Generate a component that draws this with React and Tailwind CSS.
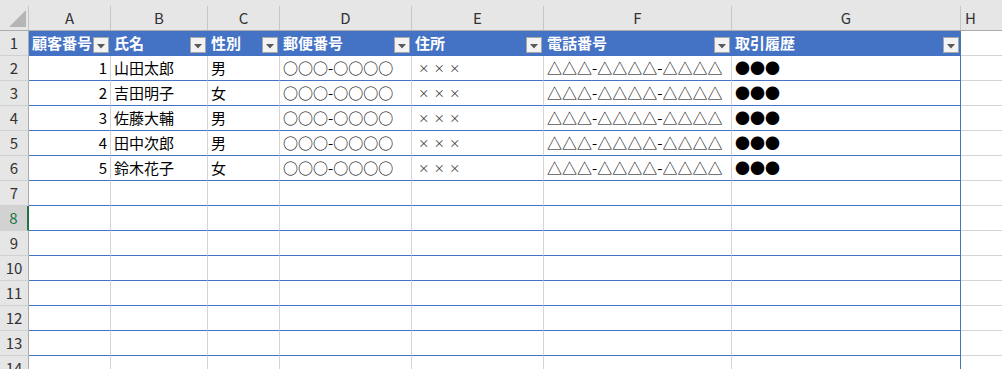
import React from "react";

const GRID = "grid grid-cols-[29px_82px_97px_72px_132px_132px_188px_229px_1fr]";
const FONT = "font-['Yu_Gothic','Noto_Sans_CJK_JP','Noto_Sans',sans-serif]";

const headers = ["顧客番号", "氏名", "性別", "郵便番号", "住所", "電話番号", "取引履歴"];
const rows = [
  [1, "山田太郎", "男"],
  [2, "吉田明子", "女"],
  [3, "佐藤大輔", "男"],
  [4, "田中次郎", "男"],
  [5, "鈴木花子", "女"],
];

function FilterButton() {
  return (
    <div className="self-end mb-[2px] mr-[1px] w-[16px] h-[16px] shrink-0 bg-[#f3f3f3] border border-[#a6a6a6] flex items-center justify-center pt-[2px]">
      <svg width="8" height="5" viewBox="0 0 8 5">
        <polygon points="0,0 8,0 4,4.5" fill="#595959" />
      </svg>
    </div>
  );
}

function Cross() {
  return (
    <span className="flex pl-[1px]">
      {[0, 1, 2].map((i) => (
        <span key={i} className="w-[15.5px] text-center text-[11px] text-[#333333]">×</span>
      ))}
    </span>
  );
}

function RowHeader({ n, selected }) {
  return (
    <div
      className={
        selected
          ? "bg-[#d2d2d2] text-[#217346] border-r-2 border-r-[#217346] border-b border-b-[#d0d0d0] flex items-center justify-center text-[15px]"
          : "bg-[#e6e6e6] text-[#333333] border-r border-r-[#ababab] border-b border-b-[#d0d0d0] flex items-center justify-center text-[15px]"
      }
    >
      {n}
    </div>
  );
}

export default function App() {
  const letters = ["A", "B", "C", "D", "E", "F", "G", "H"];
  const dataCell = "border-r border-r-[#d4d4d4] border-b border-b-[#4472c4] flex items-center px-[3px] text-[15px] text-black whitespace-nowrap overflow-hidden";
  const lastCell = "border-r border-r-[#4472c4] border-b border-b-[#4472c4] flex items-center px-[3px] text-[15px] text-black whitespace-nowrap overflow-hidden";
  const hCell = "border-b border-b-[#d4d4d4]";

  const emptyRows = [7, 8, 9, 10, 11, 12, 13, 14];

  return (
    <div className={`w-[1002px] h-[369px] overflow-hidden bg-white ${FONT}`}>
      {/* column headers */}
      <div className="bg-[#e6e6e6] pt-[6px] border-b border-b-[#ababab]">
        <div className={`${GRID} h-[24px]`}>
          <div className="border-r border-r-[#c6c6c6] relative">
            <svg width="28" height="24" viewBox="0 0 28 24" className="block">
              <polygon points="26,4 26,21 9,21" fill="#b5b5b5" />
            </svg>
          </div>
          {letters.map((l, i) => (
            <div
              key={l}
              className={
                (i < 7 ? "border-r border-r-[#c6c6c6] justify-center " : "justify-start pl-[4px] ") +
                "flex items-center text-[15px] text-[#333333]"
              }
            >
              {l}
            </div>
          ))}
        </div>
      </div>

      {/* table header row */}
      <div className={`${GRID} h-[25px]`}>
        <RowHeader n={1} />
        {headers.map((h) => (
          <div
            key={h}
            className="bg-[#4472c4] border-r border-r-[#4472c4] border-b border-b-[#4472c4] flex items-center justify-between pl-[3px] text-white font-bold text-[15px] whitespace-nowrap"
          >
            <span>{h}</span>
            <FilterButton />
          </div>
        ))}
        <div className={hCell} />
      </div>

      {/* data rows */}
      {rows.map(([id, name, sex], idx) => (
        <div key={id} className={`${GRID} h-[25px]`}>
          <RowHeader n={idx + 2} />
          <div className={`${dataCell} justify-end`}>{id}</div>
          <div className={dataCell}>{name}</div>
          <div className={dataCell}>{sex}</div>
          <div className={dataCell}>○○○-○○○○</div>
          <div className={dataCell}><Cross /></div>
          <div className={dataCell}>△△△-△△△△-△△△△</div>
          <div className={lastCell}>●●●</div>
          <div className={hCell} />
        </div>
      ))}

      {/* empty table rows */}
      {emptyRows.map((n) => (
        <div key={n} className={`${GRID} h-[25px]`}>
          <RowHeader n={n} selected={n === 8} />
          <div className={dataCell} />
          <div className={dataCell} />
          <div className={dataCell} />
          <div className={dataCell} />
          <div className={dataCell} />
          <div className={dataCell} />
          <div className={lastCell} />
          <div className={hCell} />
        </div>
      ))}
    </div>
  );
}
